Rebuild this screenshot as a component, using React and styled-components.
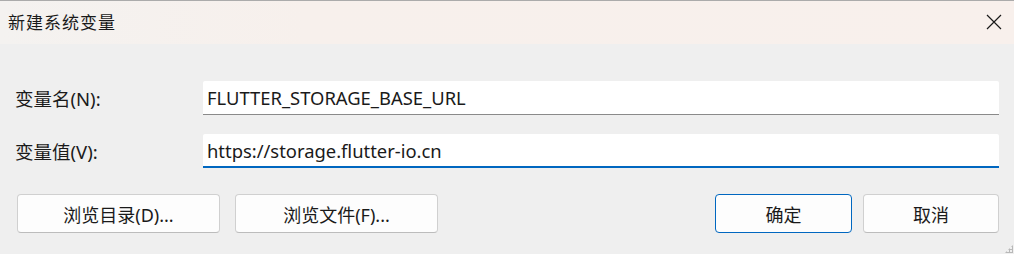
import styled, { createGlobalStyle } from "styled-components"

const Global = createGlobalStyle`
  html, body { margin: 0; padding: 0; background: #efefef; }
  body {
    font-family: "Noto Sans", "Noto Sans CJK SC", sans-serif;
    color: #1a1a1a;
  }
`

const Window = styled.div`
  width: 1014px;
  height: 254px;
  display: flex;
  flex-direction: column;
  background: #efefef;
  border-top: 1px solid #ababab;
  box-sizing: border-box;
  position: relative;
`

const TitleBar = styled.div`
  height: 43px;
  display: flex;
  align-items: center;
  justify-content: space-between;
  padding: 0 12px 0 8px;
  background: linear-gradient(90deg, #f4f2f0 0%, #f7f0ec 30%, #f8f0ec 100%);
`

const Title = styled.div`
  font-size: 17px;
  letter-spacing: 1px;
  padding-bottom: 2px;
`

const CloseButton = styled.div`
  width: 16px;
  height: 16px;
  display: flex;
  margin-top: -1px;
`

const Body = styled.div`
  flex: 1;
  padding: 37px 15px 0 15px;
  display: flex;
  flex-direction: column;
`

const Row = styled.div`
  display: grid;
  grid-template-columns: 188px 1fr;
  align-items: center;
  margin-bottom: 19px;
`

const Label = styled.div`
  font-size: 18.5px;
`

const Field = styled.div`
  height: 34px;
  box-sizing: border-box;
  background: #fff;
  border-bottom: ${props => props.focused ? "2px solid #0067c0" : "1px solid #8a8a8a"};
  border-radius: 2px 2px 0 0;
  display: flex;
  align-items: center;
  padding: 0 4px;
  font-size: 18.4px;
`

const Buttons = styled.div`
  display: flex;
  gap: 15px;
  margin-top: 7px;
  padding-left: 2px;
`

const Spacer = styled.div`
  flex: 1;
`

const Button = styled.div`
  width: ${props => props.w}px;
  height: 39px;
  box-sizing: border-box;
  border: 1px solid ${props => props.primary ? "#0067c0" : "#d0d0d0"};
  border-bottom-color: ${props => props.primary ? "#0067c0" : "#bcbcbc"};
  border-radius: 4px;
  background: #fdfdfd;
  display: flex;
  align-items: center;
  justify-content: center;
  font-size: 18px;
  margin-right: ${props => props.mr || 0}px;
`

const Grip = styled.div`
  position: absolute;
  right: 1px;
  bottom: 1px;
  width: 8px;
  height: 8px;
  background:
    radial-gradient(circle, #b8b8b8 1px, transparent 1.2px) 0 0 / 3px 3px;
  clip-path: polygon(100% 0, 100% 100%, 0 100%);
`

const App = () => {
  return (
    <>
      <Global />
      <Window>
        <TitleBar>
          <Title>新建系统变量</Title>
          <CloseButton>
            <svg width="16" height="16" viewBox="0 0 16 16">
              <path d="M1 1 L15 15 M15 1 L1 15" stroke="#1a1a1a" strokeWidth="1.2" />
            </svg>
          </CloseButton>
        </TitleBar>
        <Body>
          <Row>
            <Label>变量名(N):</Label>
            <Field>FLUTTER_STORAGE_BASE_URL</Field>
          </Row>
          <Row>
            <Label>变量值(V):</Label>
            <Field focused>https://storage.flutter-io.cn</Field>
          </Row>
          <Buttons>
            <Button w={203}>浏览目录(D)...</Button>
            <Button w={203}>浏览文件(F)...</Button>
            <Spacer />
            <Button w={137} primary mr={-4}>确定</Button>
            <Button w={136}>取消</Button>
          </Buttons>
        </Body>
        <Grip />
      </Window>
    </>
  )
}

export default App
